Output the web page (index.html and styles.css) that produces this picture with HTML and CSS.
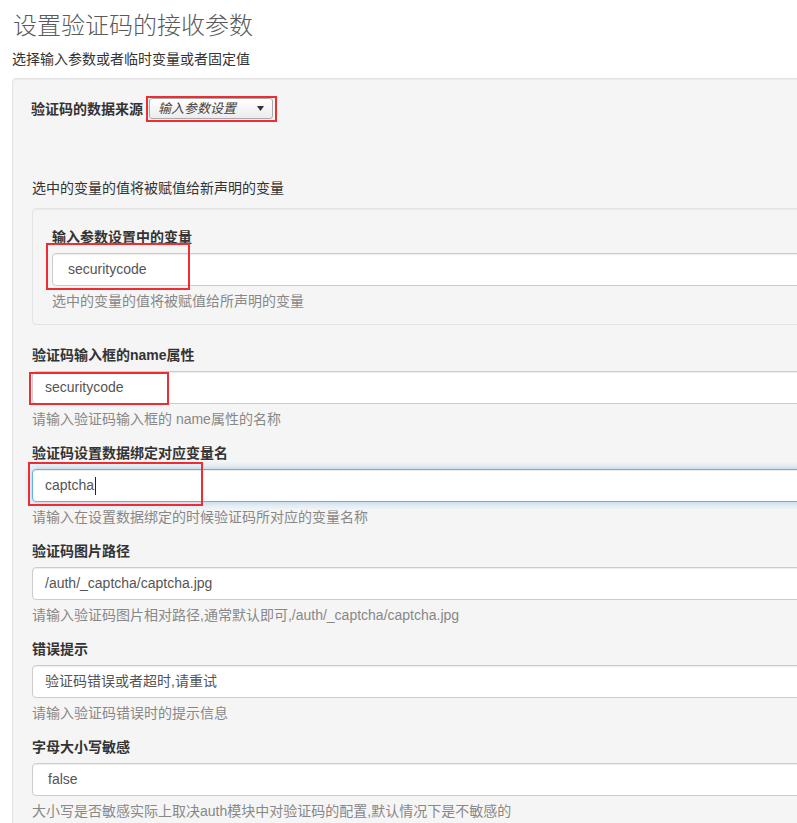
FILE: index.html
```html
<!DOCTYPE html>
<html lang="zh-CN">
<head>
<meta charset="utf-8">
<title>设置验证码的接收参数</title>
<link rel="stylesheet" href="styles.css">
</head>
<body>
<div class="page">
  <h3 class="title">设置验证码的接收参数</h3>
  <p class="subtitle">选择输入参数或者临时变量或者固定值</p>

  <div class="panel">
    <div class="source-row">
      <span class="label">验证码的数据来源</span>
      <div class="select">
        <span class="select-text">输入参数设置</span>
        <svg class="select-arrow" width="7" height="5" viewBox="0 0 7 5"><path d="M0 0H7L3.5 5Z" fill="#333"/></svg>
        <span class="mark mark-select"></span>
      </div>
    </div>

    <p class="note">选中的变量的值将被赋值给新声明的变量</p>

    <div class="well">
      <div class="label block">输入参数设置中的变量</div>
      <div class="control-wrap">
        <div class="form-control wide-pad">securitycode</div>
        <span class="mark mark-var"></span>
      </div>
      <div class="help">选中的变量的值将被赋值给所声明的变量</div>
    </div>

    <div class="group">
      <div class="label block">验证码输入框的name属性</div>
      <div class="control-wrap">
        <div class="form-control">securitycode</div>
        <span class="mark mark-name"></span>
      </div>
      <div class="help">请输入验证码输入框的 name属性的名称</div>
    </div>

    <div class="group">
      <div class="label block">验证码设置数据绑定对应变量名</div>
      <div class="control-wrap">
        <div class="form-control focus">captcha<span class="caret"></span></div>
        <span class="mark mark-bind"></span>
      </div>
      <div class="help">请输入在设置数据绑定的时候验证码所对应的变量名称</div>
    </div>

    <div class="group">
      <div class="label block">验证码图片路径</div>
      <div class="form-control">/auth/_captcha/captcha.jpg</div>
      <div class="help">请输入验证码图片相对路径,通常默认即可,/auth/_captcha/captcha.jpg</div>
    </div>

    <div class="group">
      <div class="label block">错误提示</div>
      <div class="form-control">验证码错误或者超时,请重试</div>
      <div class="help">请输入验证码错误时的提示信息</div>
    </div>

    <div class="group">
      <div class="label block">字母大小写敏感</div>
      <div class="form-control wide-pad">false</div>
      <div class="help">大小写是否敏感实际上取决auth模块中对验证码的配置,默认情况下是不敏感的</div>
    </div>
  </div>
</div>
</body>
</html>
```

FILE: styles.css
```css
html, body {
  margin: 0;
  padding: 0;
  overflow: hidden;
  background: #fff;
}

body {
  font-family: "Liberation Sans", "Noto Sans CJK SC", sans-serif;
  font-size: 14px;
  line-height: 20px;
  color: #333;
}

.page {
  width: 1120px;
  padding: 0 0 0 12px;
}

.title {
  margin: 13px 0 10px 1px;
  font-size: 24px;
  line-height: 26px;
  font-weight: 300;
  color: #5a5a5a;
}

.subtitle {
  margin: 0 0 9px 0;
  color: #333;
}

.panel {
  background: #f5f5f5;
  border: 1px solid #e3e3e3;
  border-radius: 4px;
  box-shadow: inset 0 1px 1px rgba(0, 0, 0, 0.05);
  padding: 19px;
  min-height: 900px;
}

.label {
  font-weight: bold;
  color: #333;
}

.label.block {
  display: block;
  margin-bottom: 6px;
}

.source-row {
  display: flex;
  align-items: center;
  height: 21px;
  margin-bottom: 59px;
}

.source-row .label {
  margin-left: -1px;
}

.select {
  position: relative;
  box-sizing: border-box;
  width: 124px;
  height: 21px;
  margin-left: 6px;
  border: 1px solid #aaa;
  border-radius: 3px;
  background: linear-gradient(#ffffff, #ececec);
  display: flex;
  align-items: center;
  padding: 0 8px 0 8px;
}

.select-text {
  flex: 1;
  font-style: italic;
  font-size: 13px;
  color: #444;
}

.select-arrow {
  display: block;
}

.note {
  margin: 0 0 10px 0;
}

.well {
  background: #f5f5f5;
  border: 1px solid #e3e3e3;
  border-radius: 4px;
  box-shadow: inset 0 1px 1px rgba(0, 0, 0, 0.05);
  padding: 18px 19px 13px 19px;
  margin-bottom: 20px;
}

.group {
  margin-bottom: 14px;
}

.control-wrap {
  position: relative;
}

.form-control {
  position: relative;
  box-sizing: border-box;
  height: 33px;
  padding: 6px 12px;
  line-height: 19px;
  color: #555;
  background: #fff;
  border: 1px solid #ccc;
  border-radius: 4px;
  box-shadow: inset 0 1px 1px rgba(0, 0, 0, 0.075);
  white-space: nowrap;
}

.form-control.wide-pad {
  padding-left: 15px;
}

.form-control.focus {
  border-color: #66afe9;
  box-shadow: inset 0 1px 1px rgba(0, 0, 0, 0.075), 0 0 8px rgba(102, 175, 233, 0.6);
}

.caret {
  position: absolute;
  left: 62px;
  top: 7px;
  width: 1px;
  height: 18px;
  background: #222;
}

.help {
  margin-top: 5px;
  color: #888;
}

.mark {
  position: absolute;
  box-sizing: border-box;
  border: 2px solid #ee2d32;
  pointer-events: none;
}

.mark-select {
  left: -4px;
  top: -3px;
  width: 131px;
  height: 26px;
}

.mark-var {
  left: -6px;
  top: -10px;
  width: 144px;
  height: 47px;
}

.mark-name {
  left: -3px;
  top: 1px;
  width: 140px;
  height: 33px;
}

.mark-bind {
  left: -4px;
  top: -7px;
  width: 175px;
  height: 44px;
}
```
